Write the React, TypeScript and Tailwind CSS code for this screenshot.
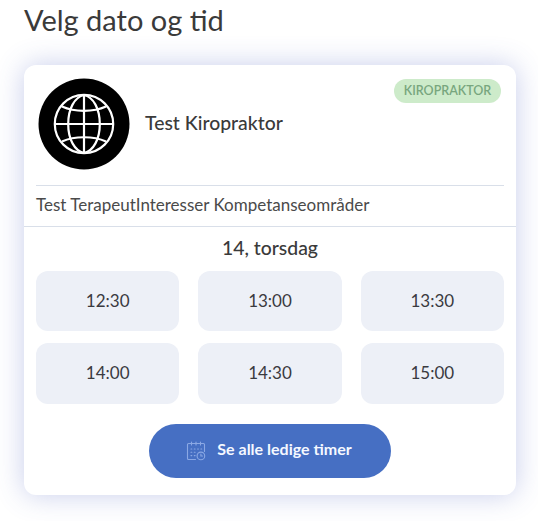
type TimeSlotProps = {
  time: string;
};

const slots = ["12:30", "13:00", "13:30", "14:00", "14:30", "15:00"];

function GlobeAvatar() {
  return (
    <svg viewBox="0 0 92 92" className="h-[92px] w-[92px] shrink-0" aria-hidden="true">
      <circle cx="46" cy="46" r="45.5" fill="#000" />
      <g fill="none" stroke="#fff" strokeWidth="2.2">
        <circle cx="46" cy="46" r="29.2" />
        <path d="M46 17c-9.5 2-15.8 14-15.8 29S36.5 73 46 75c9.5-2 15.8-14 15.8-29S55.5 19 46 17z" />
        <path d="M46 17v58M17 46h58" />
        <path d="M24 28.5c12.5 5.7 31.5 5.7 44 0M24 63.5c12.5-5.7 31.5-5.7 44 0" />
      </g>
    </svg>
  );
}

function CalendarIcon() {
  return (
    <svg
      viewBox="0 0 20 20"
      className="h-5 w-5 shrink-0"
      fill="none"
      stroke="#8ba8e4"
      strokeWidth="1.1"
      strokeLinecap="round"
      aria-hidden="true"
    >
      <path d="M9.5 18.5H2.5a1 1 0 0 1-1-1V3.5a1 1 0 0 1 1-1h15a1 1 0 0 1 1 1v7" />
      <path d="M5.5 1v3M10 1v3M14.5 1v3" />
      <path d="M5 8h.8M8.3 8h.8M11.6 8h.8M14.9 8h.8M5 11.3h.8M8.3 11.3h.8M5 14.6h.8M8.3 14.6h.8" />
      <circle cx="14.9" cy="14.9" r="3.8" />
      <path d="M14.9 13v2h1.6" />
    </svg>
  );
}

function TimeSlot({ time }: TimeSlotProps) {
  return (
    <button
      type="button"
      className="rounded-xl bg-[#edf0f7] pb-px text-[17px] text-[#3a3a3f]"
    >
      {time}
    </button>
  );
}

export default function App() {
  return (
    <main className="h-[521px] overflow-hidden bg-white pl-6 pr-[22px] pt-0.5 font-['Lato',sans-serif] text-[#3a3a3a]">
      <h1 className="h-[63px] text-[29px] leading-[36px]">Velg dato og tid</h1>

      <section className="h-[430px] rounded-xl bg-white shadow-[0_0_28px_rgba(70,90,190,0.3)]">
        <div className="px-3">
          <div className="flex h-[121px] border-b border-[#d9dfe9] pl-0.5 pt-[13px]">
            <GlobeAvatar />
            <h2 className="ml-[15px] mt-8 text-[19.4px] font-medium leading-[26px]">
              Test Kiropraktor
            </h2>
            <span className="ml-auto mr-[3px] mt-px flex h-6 w-[107px] items-center justify-center rounded-full bg-[#cdebca] text-[12.5px] font-semibold text-[#78a67e]">
              KIROPRAKTOR
            </span>
          </div>
        </div>

        <p className="h-[41px] border-b border-[#d9dfe9] px-3 text-[17px] leading-[37px] text-[#4a4a4a]">
          Test TerapeutInteresser Kompetanseområder
        </p>

        <div className="px-3">
          <h3 className="h-11 text-center text-[19.4px] font-medium leading-[42px]">
            14, torsdag
          </h3>
          <div className="grid grid-cols-3 grid-rows-[60px_61px] gap-x-[19px] gap-y-3">
            {slots.map((time) => (
              <TimeSlot key={time} time={time} />
            ))}
          </div>
          <button
            type="button"
            className="mx-auto mt-5 flex h-[54px] w-[242px] items-center justify-center rounded-full bg-[#466fc3] pr-0.5 text-base font-bold text-[#f5f8ff]"
          >
            <CalendarIcon />
            <span className="ml-[11px] pb-1">Se alle ledige timer</span>
          </button>
        </div>
      </section>
    </main>
  );
}
